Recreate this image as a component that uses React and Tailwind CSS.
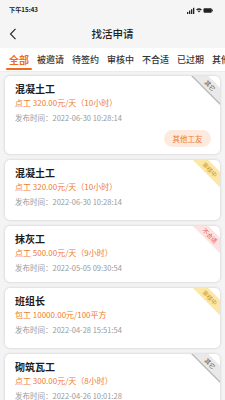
import React from "react";

const FONT = { fontFamily: '"Noto Sans CJK SC", "Noto Sans", sans-serif' };

const tabs = ["被邀请", "待签约", "审核中", "不合适", "已过期", "其他"];

const ribbonStyles = {
  gray: "bg-[#e9e9e9] text-[#555] shadow-[0_1px_1px_rgba(0,0,0,0.35)]",
  yellow: "bg-[#fce7a6] text-[#c99a2a]",
  pink: "bg-[#fde2e2] text-[#e0504f]",
};

const cards = [
  { title: "混凝土工", price: "点工 320.00元/天（10小时）", time: "发布时间：2022-06-30 10:28:14", ribbon: "其它", color: "gray", button: true },
  { title: "混凝土工", price: "点工 320.00元/天（10小时）", time: "发布时间：2022-06-30 10:28:14", ribbon: "审核中", color: "yellow" },
  { title: "抹灰工", price: "点工 500.00元/天（9小时）", time: "发布时间：2022-05-05 09:30:54", ribbon: "不合适", color: "pink", short: true },
  { title: "班组长", price: "包工 10000.00元/100平方", time: "发布时间：2022-04-28 15:51:54", ribbon: "审核中", color: "yellow" },
  { title: "砌筑瓦工", price: "点工 300.00元/天（8小时）", time: "发布时间：2022-04-26 10:01:28", ribbon: "其它", color: "gray" },
];

function StatusIcons() {
  return (
    <svg width="26" height="7" viewBox="0 0 26 7" className="block">
      <rect x="0" y="5" width="1.3" height="2" fill="#222" />
      <rect x="2" y="3.6" width="1.3" height="3.4" fill="#222" />
      <rect x="4" y="2.2" width="1.3" height="4.8" fill="#222" />
      <rect x="6" y="0.8" width="1.3" height="6.2" fill="#222" />
      <path d="M9.2 2.6 Q12 0 14.8 2.6 L13.9 3.5 Q12 1.8 10.1 3.5 Z" fill="#222" />
      <path d="M10.6 4 Q12 2.8 13.4 4 L12 5.6 Z" fill="#222" />
      <rect x="16.5" y="1.2" width="8.3" height="4.6" rx="1" fill="#222" />
      <rect x="25" y="2.6" width="0.8" height="1.8" fill="#222" />
    </svg>
  );
}

function Card({ c }) {
  return (
    <div
      className={`relative overflow-hidden bg-white rounded-[5px] shadow-[0_0_3px_rgba(0,0,0,0.18)] mx-[5px] mb-[6px] pl-[10px] pr-[9px] pt-[6px] ${
        c.button ? "pb-[7px]" : c.short ? "pb-[7px]" : "pb-[11px]"
      }`}
    >
      <div className="text-[10px] leading-[14px] font-bold text-[#1c1c1c]">{c.title}</div>
      <div className="text-[8px] leading-[14px] text-[#f07c2e]">{c.price}</div>
      <div className="text-[7.5px] leading-[14px] mt-[1px] text-[#9a9a9a]">{c.time}</div>
      {c.button && (
        <div className="flex justify-end mt-[5px]">
          <div className="h-[17px] w-[47px] rounded-full bg-[#fde9dd] text-[#f07c2e] text-[7.5px] flex items-center justify-center">
            其他工友
          </div>
        </div>
      )}
      <div
        className={`absolute top-[4px] -right-[11px] w-[42px] h-[11px] rotate-45 flex items-center justify-center text-[6px] leading-none ${ribbonStyles[c.color]}`}
      >
        {c.ribbon}
      </div>
    </div>
  );
}

export default function App() {
  return (
    <div className="w-[225px] h-[400px] overflow-hidden bg-[#f4f4f4]" style={FONT}>
      <div className="h-[20px] flex items-center justify-between pl-[9px] pr-[12px] bg-[#f5f5f5]">
        <span className="text-[6.2px] font-semibold text-[#222] leading-none">下午15:43</span>
        <StatusIcons />
      </div>
      <div className="relative h-[28px] flex items-center justify-center bg-[#f5f5f5]">
        <svg width="8" height="12" viewBox="0 0 8 12" className="absolute left-[9px] top-[8px]">
          <path d="M6.5 0.8 L1.5 6 L6.5 11.2" fill="none" stroke="#222" strokeWidth="1.1" />
        </svg>
        <span className="text-[10.5px] font-medium text-[#222]">找活申请</span>
      </div>
      <div className="h-[24px] bg-white flex items-center gap-[8px] pl-[9px] whitespace-nowrap overflow-hidden border-b border-[#ececec]">
        <div className="relative h-full flex items-center shrink-0">
          <span className="text-[10px] font-bold text-[#f26a1b]">全部</span>
          <div className="absolute bottom-[1px] -left-[3px] -right-[3px] h-[2px] bg-[#f26a1b] rounded-full" />
        </div>
        {tabs.map((t) => (
          <span key={t} className="text-[9px] text-[#333] font-medium shrink-0">
            {t}
          </span>
        ))}
      </div>
      <div className="pt-[4px]">
        {cards.map((c, i) => (
          <Card key={i} c={c} />
        ))}
      </div>
    </div>
  );
}
